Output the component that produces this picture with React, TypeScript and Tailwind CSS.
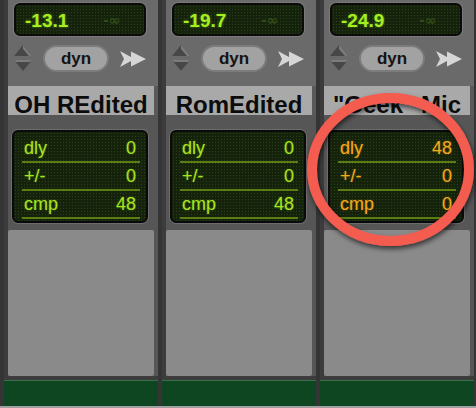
const strips = [
  { level: "-13.1", name: "OH REdited", dly: "0", pm: "0", cmp: "48", orange: false },
  { level: "-19.7", name: "RomEdited", dly: "0", pm: "0", cmp: "48", orange: false },
  { level: "-24.9", name: "\"Geek\" Mic", dly: "48", pm: "0", cmp: "0", orange: true },
];

const dots =
  "bg-[#15220c] bg-[radial-gradient(circle,#2a3f18_0.8px,transparent_1px)] bg-[length:3px_3px]";

function UpDown() {
  return (
    <svg width="18" height="27" viewBox="0 0 18 27">
      <polygon points="9,0 18,11 0,11" fill="#474747" />
      <polygon points="9,0 18,11 15,11 9,4" fill="#7c7c7c" />
      <polygon points="0,15 18,15 9,26" fill="#474747" />
      <polygon points="0,15 18,15 16,17 2,17" fill="#7c7c7c" />
    </svg>
  );
}

function Forward() {
  return (
    <svg width="26" height="16" viewBox="0 0 26 16">
      <polygon
        points="0,0 11,6 11,0.5 26,8 11,15.5 11,10 0,16 4,8"
        fill="#d6d6d6"
      />
    </svg>
  );
}

function Strip({ s }: { s: (typeof strips)[number] }) {
  const txt = s.orange
    ? "text-[#f2a81a] [text-shadow:0_0_2px_rgba(240,160,20,0.4)]"
    : "text-[#a6e41e] [text-shadow:0_0_2px_rgba(150,220,30,0.4)]";
  const rows = [
    ["dly", s.dly],
    ["+/-", s.pm],
    ["cmp", s.cmp],
  ];
  return (
    <div className="flex h-[406px] w-[154px] flex-col">
      <div className="flex h-[376px] flex-col border-l-[4px] border-[#3c3c3c]">
        {/* top: level meter, automation, name */}
        <div className="flex h-[86px] flex-col bg-[#6a6a6a] pt-[3px]">
          <div
            className={`ml-[6px] h-[33px] w-[132px] rounded-[6px] border-2 border-[#0a0a0a] shadow-[0_0_0_1px_#7a7a7a] ${dots} relative pl-[9px] pt-[6px]`}
          >
            <span className="block font-['Liberation_Sans',sans-serif] text-[19px] leading-[19px] font-bold text-[#a6ee1e] [text-shadow:0_0_3px_rgba(150,230,30,0.45)]">
              {s.level}
            </span>
            <span className="absolute top-[8px] left-[87px] font-['DejaVu_Sans',sans-serif] text-[14px] leading-[14px] font-bold text-[#324d18]">
              -∞
            </span>
          </div>
          <div className="mt-[9px] flex h-[27px] items-center">
            <div className="ml-[6px] flex w-[18px] items-center">
              <UpDown />
            </div>
            <div className="ml-[11px] flex h-[27px] w-[66px] items-center justify-center rounded-full border-2 border-[#7c7c7c] bg-[#a2a2a2] font-['Liberation_Sans',sans-serif] text-[17px] font-bold text-[#141414]">
              dyn
            </div>
            <div className="ml-[11px] flex items-center">
              <Forward />
            </div>
          </div>
        </div>
        {/* track name */}
        <div className="h-[29px] bg-[#5a5a5a] pr-[4px]">
          <div className="h-[29px] bg-[#a9a9a9] pt-[9px] text-center">
            <span className="block font-['Liberation_Sans',sans-serif] text-[24px] leading-[20px] font-bold whitespace-nowrap text-[#0c0c0c]">
              {s.name}
            </span>
          </div>
        </div>
        {/* delay / comp panel */}
        <div className="flex flex-1 flex-col bg-[#565656] pt-[15px] pr-[4px]">
          <div
            className={`ml-[4px] h-[93px] w-[136px] rounded-[6px] border-2 border-[#0a0a0a] shadow-[0_0_0_1px_#6c6c6c] ${dots} pt-[3px] pr-[6px] pl-[8px]`}
          >
            {rows.map(([label, value]) => (
              <div
                key={label}
                className={`flex h-[28px] items-start justify-between border-b-2 border-[#5c7c14] pr-[4px] pl-[2px] font-['Liberation_Sans',sans-serif] text-[18px] leading-[26px] ${txt}`}
              >
                <span>{label}</span>
                <span>{value}</span>
              </div>
            ))}
          </div>
          <div className="mt-[7px] h-[146px] w-[146px] rounded-[2px] bg-[#8a8a8a]" />
        </div>
      </div>
      <div className="h-[4px] bg-[#3c3c3c]" />
      <div className="h-[26px] border-t border-[#3a6e48] bg-[#0d4620]" />
    </div>
  );
}

export default function App() {
  return (
    <div className="relative h-[408px] w-[476px] overflow-hidden bg-[#353535]">
      <div className="flex gap-[4px] pl-[4px]">
        {strips.map((s) => (
          <Strip key={s.name} s={s} />
        ))}
      </div>
      <div className="h-[2px] bg-[#a0a0a0]" />
      {/* red highlight ring */}
      <svg
        className="pointer-events-none absolute top-0 left-0"
        width="476"
        height="408"
        viewBox="0 0 476 408"
      >
        <defs>
          <filter id="sh" x="-20%" y="-20%" width="140%" height="140%">
            <feDropShadow dx="1" dy="3" stdDeviation="2.5" floodColor="#000" floodOpacity="0.6" />
          </filter>
        </defs>
        <ellipse
          cx="390.5"
          cy="169.5"
          rx="78.5"
          ry="71.5"
          fill="none"
          stroke="#f45b4f"
          strokeWidth="10"
          filter="url(#sh)"
        />
      </svg>
    </div>
  );
}
